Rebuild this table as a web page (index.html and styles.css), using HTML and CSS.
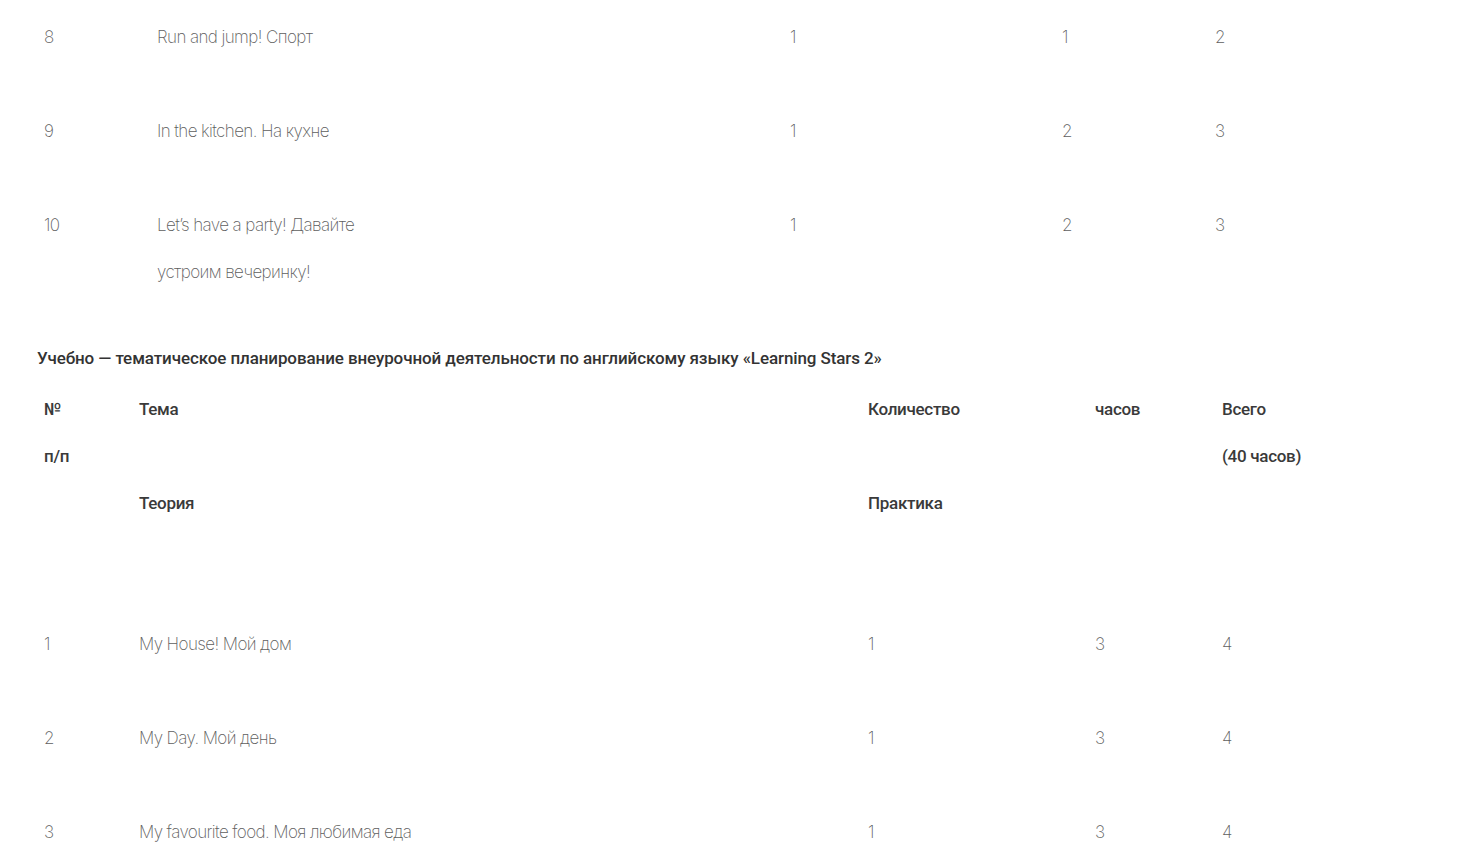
FILE: index.html
```html
<!DOCTYPE html>
<html lang="ru">
<head>
    <meta charset="UTF-8">
    <title>Learning Stars</title>
    <link rel="stylesheet" href="styles.css">
</head>
<body>
    <div class="page">
        <div class="plan plan-first">
            <div class="row">
                <div class="cell">8</div>
                <div class="cell">Run and jump! Спорт</div>
                <div class="cell">1</div>
                <div class="cell">1</div>
                <div class="cell">2</div>
            </div>
            <div class="row">
                <div class="cell">9</div>
                <div class="cell">In the kitchen. На кухне</div>
                <div class="cell">1</div>
                <div class="cell">2</div>
                <div class="cell">3</div>
            </div>
            <div class="row">
                <div class="cell">10</div>
                <div class="cell">Let’s have a party! Давайте<br>устроим вечеринку!</div>
                <div class="cell">1</div>
                <div class="cell">2</div>
                <div class="cell">3</div>
            </div>
        </div>

        <h2 class="plan-title">Учебно — тематическое планирование внеурочной деятельности по английскому языку «Learning Stars 2»</h2>

        <div class="plan plan-second">
            <div class="row row-head">
                <div class="cell">№<br>п/п</div>
                <div class="cell">Тема<br>&nbsp;<br>Теория</div>
                <div class="cell">Количество<br>&nbsp;<br>Практика</div>
                <div class="cell">часов</div>
                <div class="cell">Всего<br>(40 часов)</div>
            </div>
            <div class="row">
                <div class="cell">1</div>
                <div class="cell">My House! Мой дом</div>
                <div class="cell">1</div>
                <div class="cell">3</div>
                <div class="cell">4</div>
            </div>
            <div class="row">
                <div class="cell">2</div>
                <div class="cell">My Day. Мой день</div>
                <div class="cell">1</div>
                <div class="cell">3</div>
                <div class="cell">4</div>
            </div>
            <div class="row">
                <div class="cell">3</div>
                <div class="cell">My favourite food. Моя любимая еда</div>
                <div class="cell">1</div>
                <div class="cell">3</div>
                <div class="cell">4</div>
            </div>
        </div>
    </div>
</body>
</html>
```

FILE: styles.css
```css
/* Base */
* {
    margin: 0;
    padding: 0;
    box-sizing: border-box;
}

body {
    font-family: Inter, 'Noto Sans', sans-serif;
    font-weight: 200;
    font-size: 17px;
    letter-spacing: -0.6px;
    color: #5e5e5e;
    background-color: #ffffff;
}

.page {
    padding: 14px 0 0 37px;
}

/* Plan tables */
.row {
    display: grid;
    line-height: 47px;
    padding-bottom: 47px;
}

.cell {
    padding-left: 7px;
}

.plan-first .row {
    grid-template-columns: 113px 633px 272px 153px 1fr;
}

.plan-second .row {
    grid-template-columns: 95px 729px 227px 127px 1fr;
}

.row-head {
    font-family: Roboto, 'Noto Sans', sans-serif;
    font-weight: 500;
    font-size: 17px;
    letter-spacing: -0.3px;
    color: #3a3a3a;
}

.plan-second .row-head {
    padding-bottom: 94px;
}

/* Title */
.plan-title {
    font-family: Roboto, 'Noto Sans', sans-serif;
    font-weight: 500;
    font-size: 17px;
    letter-spacing: -0.1px;
    line-height: 30px;
    color: #333333;
    margin-bottom: 13px;
}
```
